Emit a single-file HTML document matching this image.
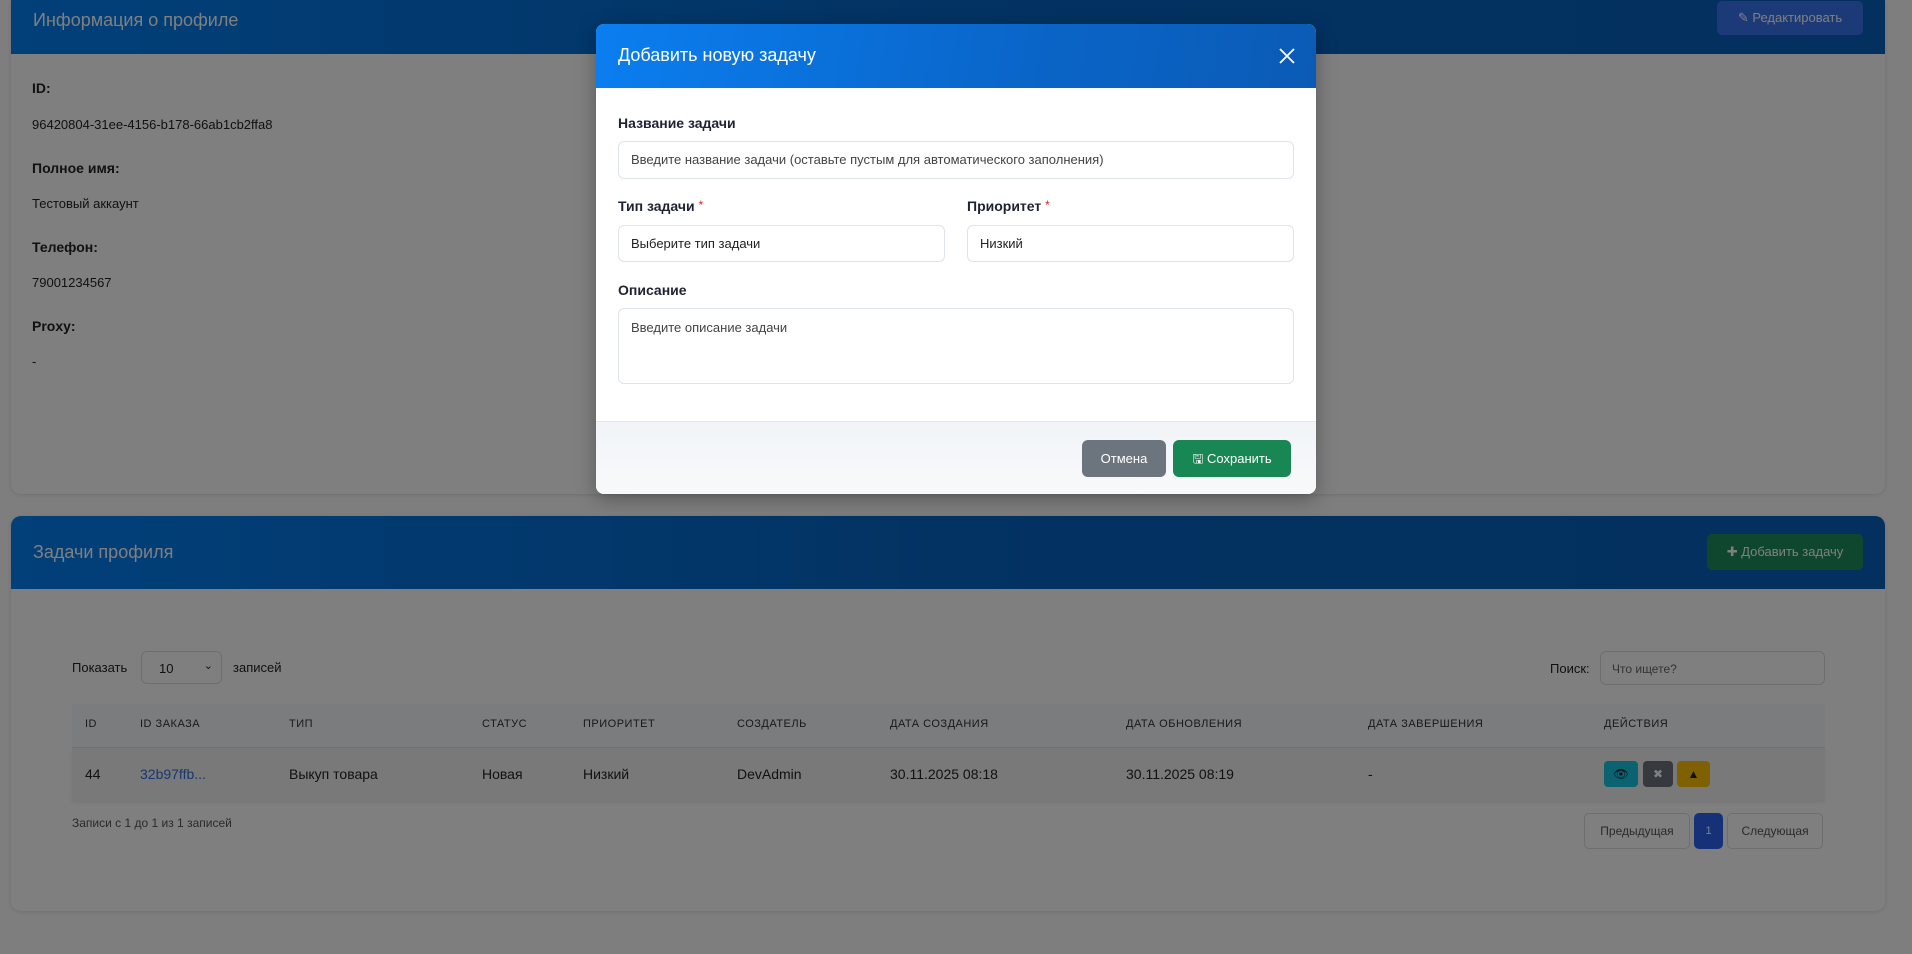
<!DOCTYPE html>
<html><head><meta charset="utf-8"><style>
*{box-sizing:border-box;margin:0;padding:0}
body{width:1912px;height:954px;overflow:hidden;background:#fcfcfc;font-family:"Liberation Sans",sans-serif;position:relative;color:#222;font-size:14px}
.abs{position:absolute}
.card{position:absolute;left:11px;width:1874px;background:#ffffff;border-radius:10px;box-shadow:0 1px 4px rgba(0,0,0,.12)}
.hdr{position:absolute;left:0;top:0;width:100%;background:linear-gradient(90deg,#0480f4,#0666c6 50%,#0660bc);color:#fff;font-size:18px}
.b{font-weight:bold}
.th{position:absolute;top:718px;font-size:11px;letter-spacing:.5px;color:#333}
.td{position:absolute;top:766px;font-size:14px;color:#222}
.inp{position:absolute;background:#fff;border:1px solid #dfe3ea;border-radius:6px;font-size:13px;color:#444;padding-left:12px}
.lbl{position:absolute;left:618px;font-size:14px;font-weight:bold;color:#1d2333}
.req{color:#d22;font-weight:normal;font-size:12px;vertical-align:top}
</style></head><body>

<div class="card" style="top:0;height:494px;border-radius:0 0 10px 10px">
 <div class="hdr" style="height:54px;border-radius:0"><span class="abs" style="left:22px;top:10px">Информация о профиле</span>
 <div class="abs" style="left:1706px;top:1px;width:146px;height:34px;background:#3a74f0;border-radius:5px;color:#fff;font-size:13px;text-align:center;line-height:34px">✎ Редактировать</div></div>
</div>
<div class="abs b" style="left:32px;top:80px">ID:</div>
<div class="abs" style="left:32px;top:117px;font-size:13px">96420804-31ee-4156-b178-66ab1cb2ffa8</div>
<div class="abs b" style="left:32px;top:160px">Полное имя:</div>
<div class="abs" style="left:32px;top:196px;font-size:13px">Тестовый аккаунт</div>
<div class="abs b" style="left:32px;top:239px">Телефон:</div>
<div class="abs" style="left:32px;top:275px;font-size:13px">79001234567</div>
<div class="abs b" style="left:32px;top:318px">Proxy:</div>
<div class="abs" style="left:32px;top:354px;font-size:13px">-</div>

<div class="card" style="top:516px;height:395px">
 <div class="hdr" style="height:73px;border-radius:10px 10px 0 0"><span class="abs" style="left:22px;top:26px">Задачи профиля</span>
 <div class="abs" style="left:1696px;top:18px;width:156px;height:36px;background:#1f8f5c;border-radius:5px;color:#fff;font-size:13px;text-align:center;line-height:36px">✚ Добавить задачу</div></div>
</div>
<div class="abs" style="left:72px;top:660px;font-size:13px">Показать</div>
<div class="abs" style="left:141px;top:651px;width:81px;height:33px;border:1px solid #dcdcdc;border-radius:6px;font-size:13px;padding:9px 0 0 17px">10<span class="abs" style="right:8px;top:7px;font-size:11px">⌄</span></div>
<div class="abs" style="left:233px;top:660px;font-size:13px">записей</div>
<div class="abs" style="left:1550px;top:661px;font-size:13px">Поиск:</div>
<div class="abs" style="left:1600px;top:651px;width:225px;height:34px;border:1px solid #dcdcdc;border-radius:6px;font-size:12px;color:#666;padding:10px 0 0 11px">Что ищете?</div>

<div class="abs" style="left:72px;top:704px;width:1753px;height:44px;background:#f6f8fb;border-bottom:1px solid #e0e3e8"></div>
<div class="abs" style="left:72px;top:748px;width:1753px;height:53px;background:#f3f3f3;box-shadow:0 2px 4px rgba(0,0,0,.08)"></div>
<div class="th" style="left:85px">ID</div><div class="th" style="left:140px">ID ЗАКАЗА</div><div class="th" style="left:289px">ТИП</div><div class="th" style="left:482px">СТАТУС</div><div class="th" style="left:583px">ПРИОРИТЕТ</div><div class="th" style="left:737px">СОЗДАТЕЛЬ</div><div class="th" style="left:890px">ДАТА СОЗДАНИЯ</div><div class="th" style="left:1126px">ДАТА ОБНОВЛЕНИЯ</div><div class="th" style="left:1368px">ДАТА ЗАВЕРШЕНИЯ</div><div class="th" style="left:1604px">ДЕЙСТВИЯ</div>
<div class="td" style="left:85px">44</div><div class="td" style="left:140px;color:#2f6ee0">32b97ffb...</div><div class="td" style="left:289px">Выкуп товара</div><div class="td" style="left:482px">Новая</div><div class="td" style="left:583px">Низкий</div><div class="td" style="left:737px">DevAdmin</div><div class="td" style="left:890px">30.11.2025 08:18</div><div class="td" style="left:1126px">30.11.2025 08:19</div><div class="td" style="left:1368px">-</div>
<div class="abs" style="left:1604px;top:761px;width:34px;height:26px;background:#17c4e0;border-radius:4px;text-align:center;line-height:26px;font-size:12px">👁</div>
<div class="abs" style="left:1643px;top:761px;width:30px;height:26px;background:#6c757d;border-radius:4px;text-align:center;line-height:26px;font-size:12px;color:#fff">✖</div>
<div class="abs" style="left:1677px;top:761px;width:33px;height:26px;background:#ffc107;border-radius:4px;text-align:center;line-height:26px;font-size:12px">▲</div>
<div class="abs" style="left:72px;top:816px;font-size:12px;color:#555">Записи с 1 до 1 из 1 записей</div>
<div class="abs" style="left:1584px;top:813px;width:106px;height:36px;border:1px solid #dcdcdc;border-radius:5px;font-size:12px;text-align:center;line-height:34px;color:#555">Предыдущая</div>
<div class="abs" style="left:1694px;top:813px;width:29px;height:36px;background:#2e63f0;border-radius:5px;font-size:11px;text-align:center;line-height:36px;color:#fff">1</div>
<div class="abs" style="left:1727px;top:813px;width:96px;height:36px;border:1px solid #dcdcdc;border-radius:5px;font-size:12px;text-align:center;line-height:34px;color:#555">Следующая</div>

<div class="abs" style="left:0;top:0;width:1912px;height:954px;background:rgba(0,0,0,0.5)"></div>

<!-- modal -->
<div class="abs" style="left:596px;top:24px;width:720px;height:470px;background:#fff;border-radius:8px;overflow:hidden;box-shadow:0 5px 20px rgba(0,0,0,.3)">
 <div class="abs" style="left:0;top:0;width:720px;height:64px;background:linear-gradient(100deg,#0b7ef0,#0a65c8 60%,#0b5bb6)">
  <span class="abs" style="left:22px;top:21px;color:#fff;font-size:18px">Добавить новую задачу</span>
  <svg class="abs" style="left:683px;top:24px" width="16" height="16" viewBox="0 0 16 16"><path d="M1 1L15 15M15 1L1 15" stroke="#fff" stroke-width="1.8"/></svg>
 </div>
 <div class="abs" style="left:0;top:397px;width:720px;height:73px;background:linear-gradient(#f1f4f8,#f8f9fb);border-top:1px solid #e3e7ec"></div>
</div>
<div class="lbl" style="top:115px">Название задачи</div>
<div class="inp" style="left:618px;top:141px;width:676px;height:38px;line-height:36px">Введите название задачи (оставьте пустым для автоматического заполнения)</div>
<div class="lbl" style="top:198px">Тип задачи <span class="req">*</span></div>
<div class="lbl" style="left:967px;top:198px">Приоритет <span class="req">*</span></div>
<div class="inp" style="left:618px;top:225px;width:327px;height:37px;line-height:35px;color:#222">Выберите тип задачи</div>
<div class="inp" style="left:967px;top:225px;width:327px;height:37px;line-height:35px;color:#222">Низкий</div>
<div class="lbl" style="top:282px">Описание</div>
<div class="inp" style="left:618px;top:308px;width:676px;height:76px;padding-top:11px">Введите описание задачи</div>
<div class="abs" style="left:1082px;top:440px;width:84px;height:37px;background:#6c757d;border-radius:6px;color:#fff;font-size:13px;text-align:center;line-height:37px">Отмена</div>
<div class="abs" style="left:1173px;top:440px;width:118px;height:37px;background:#198754;border-radius:6px;color:#fff;font-size:13px;text-align:center;line-height:37px">🖫 Сохранить</div>
</body></html>
